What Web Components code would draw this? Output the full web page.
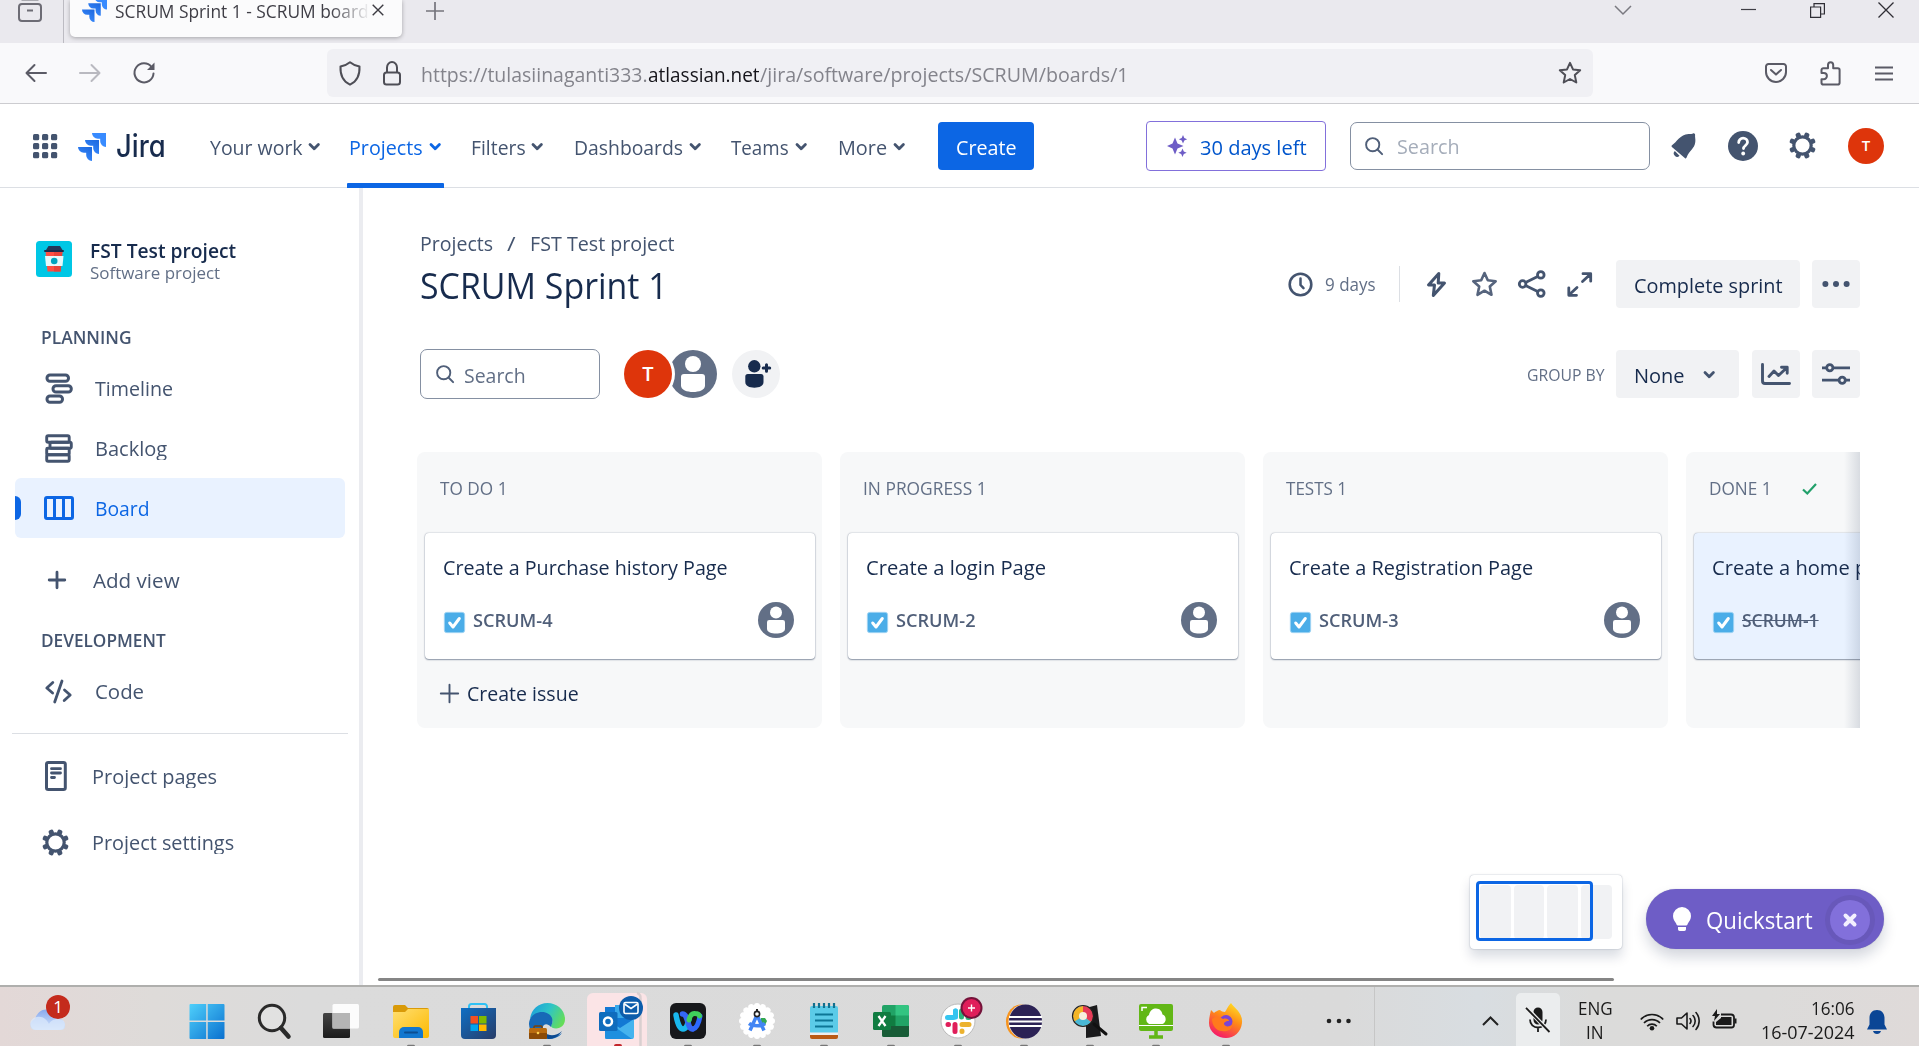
<!DOCTYPE html>
<html lang="en">
<head>
<meta charset="utf-8">
<title>SCRUM Sprint 1 - SCRUM board</title>
<style>
html,body{margin:0;padding:0}
body{width:1919px;height:1046px;overflow:hidden;background:#fff;font-family:"Open Sans","Noto Sans",sans-serif;font-size:20px;color:#44546f}
</style>
</head>
<body>
<desktop-screen></desktop-screen>
<script>
const G='#44546f';
const gear=`<circle cx="13.5" cy="13.5" r="8.7" fill="none" stroke="${G}" stroke-width="3.2"/><g fill="${G}">${[22.5,67.5,112.5,157.5,202.5,247.5,292.5,337.5].map(a=>`<rect x="11" y="0" width="5" height="5" rx="1.8" transform="rotate(${a} 13.5 13.5)"/>`).join('')}</g>`;
const chev=c=>`<path d="M2 2.5l4.2 4.3 4.2-4.3" fill="none" stroke="${c}" stroke-width="2.8" stroke-linecap="round" stroke-linejoin="round"/>`;
const jiraMark=`<defs><linearGradient id="a" x1="1" y1="0" x2=".4" y2="1"><stop offset=".1" stop-color="#1f6ae0"/><stop offset="1" stop-color="#388bff"/></linearGradient></defs><path fill="#388bff" d="M14 0h14v14a5.8 5.8 0 0 1-5.8-5.8V5.8h-2.4A5.8 5.8 0 0 1 14 0z"/><path fill="url(#a)" d="M7 7h14v14a5.8 5.8 0 0 1-5.8-5.8v-2.4h-2.4A5.8 5.8 0 0 1 7 7z"/><path fill="url(#a)" d="M0 14h14v14a5.8 5.8 0 0 1-5.8-5.8v-2.4H5.800A5.8 5.8 0 0 1 0 14z"/>`;
const run='<rect x="14" y="41.700" width="8" height="3" rx="1.5" fill="#777"/>';
const personShape='<circle cx="24" cy="24" r="24" fill="#626f86"/><circle cx="24" cy="14" r="8" fill="#fff"/><path d="M12 27a3 3 0 0 1 3-3h18a3 3 0 0 1 3 3v8.500C36 40 30 42 24 42s-12-2-12-6.500z" fill="#fff"/>';
const ICONS={
recent:[24,24,`<g fill="none" stroke="#6d6c75" stroke-width="2"><rect x="1" y="6" width="22" height="17" rx="3"/><path d="M3.500 1.500h17"/></g><path d="M9 12.500h6" stroke="#6d6c75" stroke-width="2"/>`],
jiraTab:[25,25,`<svg width="25" height="25" viewBox="0 0 28 28">${jiraMark}</svg>`],
jira:[28,28,jiraMark],
tabX:[12,12,`<path d="M.7.7l10.600 10.600M11.300.7L.7 11.300" stroke="#3c3b42" stroke-width="1.400"/>`],
tabPlus:[18,18,`<path d="M9 0v18M0 9h18" stroke="#75747c" stroke-width="1.700"/>`],
chevThin:[18,10,`<path d="M1 1l8 8 8-8" fill="none" stroke="#7a7980" stroke-width="1.500"/>`],
min:[15,14,`<path d="M0 6.500h15" stroke="#3f3e45" stroke-width="1.200"/>`],
restore:[15,15,`<path d="M.6 4h10v10.400H.6zM4 4V.6h10.400v10.400h-3.800" fill="none" stroke="#2f2e35" stroke-width="1.200"/>`],
winX:[16,16,`<path d="M.5.5l15 15M15.500.5l-15 15" stroke="#2f2e35" stroke-width="1.300"/>`],
back:[22,18,`<path d="M21 9H2M9.500 1L1.500 9l8 8" fill="none" stroke="#5b5b66" stroke-width="2" stroke-linecap="round" stroke-linejoin="round"/>`],
fwd:[22,18,`<path d="M1 9h19M12.500 1l8 8-8 8" fill="none" stroke="#b9b9c0" stroke-width="2" stroke-linecap="round" stroke-linejoin="round"/>`],
reload:[22,22,`<path d="M18.500 5A9.500 9.500 0 1 0 20.500 11.500" fill="none" stroke="#5b5b66" stroke-width="2" stroke-linecap="round"/><path d="M21.500.5v7.500h-7.500z" fill="#5b5b66"/>`],
shield:[22,25,`<path d="M11 1.200c2.600 2.200 6 3.600 9.500 4.200.4 8-1.500 14.600-9.500 18.300C3 20 1.100 13.400 1.500 5.400 5 4.800 8.400 3.400 11 1.200z" fill="none" stroke="#4e4e56" stroke-width="2" stroke-linejoin="round"/>`],
lock:[18,25,`<g fill="none" stroke="#4e4e56" stroke-width="2"><rect x="1" y="11.500" width="16" height="12" rx="2.500"/><path d="M4 11V6.500a5 5.500 0 0 1 10 0V11"/></g>`],
urlStar:[24,24,`<path d="M12 1.800l3 6.600 7.200.8-5.400 4.900 1.500 7.400L12 18l-6.300 3.500 1.500-7.400L1.800 9.200 9 8.400z" fill="none" stroke="#4e4e56" stroke-width="2" stroke-linejoin="round"/>`],
pocket:[22,20,`<g fill="none" stroke="#5b5b66" stroke-width="2" stroke-linecap="round" stroke-linejoin="round"><path d="M3.500 1h15A2.500 2.500 0 0 1 21 3.500V9a10 10 0 0 1-20 0V3.500A2.500 2.500 0 0 1 3.500 1z"/><path d="M6 7l5 4.600L16 7"/></g>`],
puzzle:[21,25,`<path d="M1.500 12V9a1.800 1.800 0 0 1 1.800-1.800H8V4a2.600 2.800 0 0 1 5.200 0v3.200h4.600A1.800 1.800 0 0 1 19.600 9v12.800a1.800 1.800 0 0 1-1.800 1.800H3.300a1.800 1.800 0 0 1-1.800-1.800v-3.600h2.300a3 3 0 0 0 0-6.200z" fill="none" stroke="#5b5b66" stroke-width="2" stroke-linejoin="round"/>`],
burger:[18,15,`<path d="M0 1.500h18M0 7.500h18M0 13.500h18" stroke="#5b5b66" stroke-width="1.800"/>`],
apps:[24,24,`<g fill="${G}">${[0,9,18].map(y=>[0,9,18].map(x=>`<rect x="${x}" y="${y}" width="6.200" height="6.200" rx="1.500"/>`).join('')).join('')}</g>`],
chev:[12.500,9,chev(G)],
chevBlue:[12.500,9,chev('#0c66e4')],
sparkle:[20,22,`<g fill="#6e5dc6"><path d="M8 2.500l2.500 6L16.500 11l-6 2.500-2.500 6-2.500-6L0 11l5.500-2.500z"/><path d="M16 0l1.300 2.900 2.900 1.300-2.900 1.300L16 8.400l-1.300-2.900-2.900-1.300 2.900-1.300z"/><path d="M15.500 13.500l1.300 2.900 2.900 1.300-2.900 1.300-1.300 2.900-1.300-2.900-2.900-1.300 2.900-1.300z"/></g>`],
search:[18,18,`<circle cx="7.700" cy="7.700" r="6.600" fill="none" stroke="#505f79" stroke-width="1.900"/><path d="M12.500 12.500l4.600 4.600" stroke="#505f79" stroke-width="2" stroke-linecap="round"/>`],
bell:[26,26,`<path d="M1 12.300C6 9 9 1.600 17.500 1.100c2.200-.1 3.500-.1 4.900-.9.900-.2 1.900.7 1.700 1.700-.3 2 .6 4 .2 7.200-.9 7.200-6 8-8.700 15.500a1.100 1.100 0 0 1-1.800.3L.9 13.900a1 1 0 0 1 .1-1.600z" fill="${G}"/><path d="M3.800 18l4.700 4.700a3.300 3.300 0 1 1-4.700-4.700z" fill="${G}"/>`],
help:[30,30,`<circle cx="15" cy="15" r="15" fill="${G}"/><path d="M10.700 11.600c0-2.700 1.900-4.400 4.400-4.400s4.400 1.700 4.400 4c0 3-4 3.500-4 6.300" fill="none" stroke="#fff" stroke-width="2.800" stroke-linecap="round"/><circle cx="15.200" cy="22.500" r="1.900" fill="#fff"/>`],
gear:[27,27,gear],
cup:[36,36,`<rect width="36" height="36" rx="3.500" fill="#00c7e5"/><path d="M9.500 10h17l-1.800 20.500H11.500z" fill="#ff4f43"/><path d="M18 10h8.500l-1.800 20.500H18z" fill="#e8433a"/><path d="M9 15h18.500l-1 10h-16.500z" fill="#e6f9fb"/><path d="M12.500 5h11.500l2.500 4H27.500v2H8.500V9h1.500z" fill="#253858"/><path d="M10 9h17.500v2h-19V9z" fill="#172b4d"/><circle cx="18.200" cy="20" r="3.300" fill="#00a3bf"/>`],
timeline:[28,31,`<g fill="none" stroke="${G}" stroke-width="3"><rect x="2" y="2" width="21.500" height="6.300" rx="3"/><rect x="8" y="12.800" width="18.300" height="6.300" rx="3"/><rect x="2" y="23" width="15.500" height="6.300" rx="3"/></g>`],
backlog:[28,29,`<g fill="none" stroke="${G}" stroke-width="2.900"><rect x="1.700" y="1.700" width="22.500" height="6.500" rx="1.500"/><rect x="5" y="8.200" width="21.300" height="6" rx="1.500"/><rect x="1.700" y="14.200" width="22.500" height="6.500" rx="1"/><rect x="1.700" y="20.700" width="22.500" height="6.500" rx="1.500"/></g>`],
board:[30,24,`<g fill="none" stroke="#0c66e4" stroke-width="3"><rect x="1.500" y="1.500" width="27" height="21" rx="1.500"/><path d="M10.500 1.500v21M19.500 1.500v21"/></g>`],
plus:[18,18,`<path d="M9 1.200v15.600M1.200 9h15.600" stroke="${G}" stroke-width="2.800" stroke-linecap="round"/>`],
plusThin:[19,19,`<path d="M9.500.8v17.400M.8 9.500h17.400" stroke="${G}" stroke-width="1.900" stroke-linecap="round"/>`],
code:[27,25,`<path d="M7.800 3.500L1.800 9l5.800 5M19.500 11l5.700 5-6 5.500M17 2L9.700 23" fill="none" stroke="${G}" stroke-width="2.800" stroke-linecap="round" stroke-linejoin="round"/>`],
page:[22,30,`<rect x="1.500" y="1.500" width="18.800" height="27" rx="1.800" fill="none" stroke="${G}" stroke-width="3"/><path d="M6.500 7.700h9M6.500 12h9M6.500 16.500h3" stroke="${G}" stroke-width="2.800" stroke-linecap="round"/>`],
clock:[25,25,`<circle cx="12.500" cy="12.500" r="10.800" fill="none" stroke="${G}" stroke-width="2.600"/><path d="M12.500 6.500v6.500l3 3.200" fill="none" stroke="${G}" stroke-width="2.500" stroke-linecap="round" stroke-linejoin="round"/>`],
bolt:[19,25,`<path d="M11.800 1.500L1.500 13h6l-1.200 10.500L17.500 11h-6.300z" fill="none" stroke="${G}" stroke-width="3" stroke-linejoin="round"/>`],
star:[27,27,`<path d="M13.500 2l3.300 7.300 7.900.9-5.900 5.300 1.700 8.300-7-4.100-7 4.100 1.700-8.300-5.900-5.300 7.900-.9z" fill="none" stroke="#56647d" stroke-width="2.600" stroke-linejoin="round"/>`],
share:[28,28,`<g fill="none" stroke="${G}" stroke-width="2.800"><circle cx="4.600" cy="14" r="3.300"/><circle cx="22.800" cy="4.900" r="3.300"/><circle cx="22.800" cy="23.100" r="3.300"/><path d="M7.500 12.400l12.200-6M7.500 15.600l12.200 6"/></g>`],
expand:[26,25,`<path d="M16 1.700h7.700v7.500M23 2.500l-7.500 7M9.500 23.300H1.800v-7.500M2.500 22.500l7.500-7" fill="none" stroke="${G}" stroke-width="2.800" stroke-linecap="round" stroke-linejoin="round"/>`],
dots:[28,8,`<g fill="${G}"><circle cx="3.400" cy="4" r="3"/><circle cx="14" cy="4" r="3"/><circle cx="24.600" cy="4" r="3"/></g>`],
chart:[30,22,`<g fill="none" stroke="${G}" stroke-width="2.900" stroke-linecap="round" stroke-linejoin="round"><path d="M1.500 1.500V18a2.500 2.500 0 0 0 2.500 2.500h24.500"/><path d="M8 13.500l5-5.500 4.500 4.500L26 4.500M20.500 4.200h5.700v6"/></g>`],
sliders:[28,22,`<g fill="none" stroke="${G}" stroke-width="2.800"><path d="M0 4.800h4.500M11 4.800h17M0 17.200h17M23.500 17.200H28"/><circle cx="7.800" cy="4.800" r="3.100"/><circle cx="20.200" cy="17.200" r="3.100"/></g>`],
person:[48,48,personShape],
person36:[36,36,`<svg width="36" height="36" viewBox="0 0 48 48">${personShape}</svg>`],
addPerson:[48,48,`<circle cx="24" cy="24" r="24" fill="#f1f2f4"/><g fill="#172b4d"><circle cx="22.300" cy="16.300" r="6.200"/><path d="M13.300 26.500a2.500 2.500 0 0 1 2.500-2.500h13.200a2.500 2.500 0 0 1 2.500 2.500V32c0 4-4 5.700-9.100 5.700S13.300 36 13.300 32z"/></g><path d="M34.500 14.800v6.500M31.200 18h6.500" stroke="#172b4d" stroke-width="3" stroke-linecap="round"/>`],
task:[21,21,`<rect x=".3" y=".3" width="20.400" height="20.400" rx="2.500" fill="#4bade8" stroke="#a9d8f4" stroke-width=".8"/><path d="M5.700 11l3.300 4L15.300 6.500" fill="none" stroke="#fff" stroke-width="3" stroke-linecap="round" stroke-linejoin="round"/>`],
done:[15,12,`<path d="M1 6.500l4.300 4L14 1" fill="none" stroke="#22a06b" stroke-width="2.200"/>`],
bulb:[18,24,`<path d="M9 0a9 9 0 0 1 9 9c0 3.500-1.800 5.200-3 7.200-.6 1-.5 2.300-1.800 2.300H4.800c-1.300 0-1.200-1.300-1.800-2.300C1.800 14.200 0 12.500 0 9a9 9 0 0 1 9-9zM5 20h8v2.300A1.700 1.700 0 0 1 11.300 24H6.700A1.700 1.700 0 0 1 5 22.300z" fill="#fff"/>`],
qx:[50,50,`<circle cx="25" cy="25" r="25" fill="#6858ba"/><circle cx="25" cy="25" r="20" fill="#8270db"/><path d="M20.500 20.500l9 9M29.500 20.500l-9 9" stroke="#f3f0ff" stroke-width="4" stroke-linecap="round"/>`],
/* taskbar */
weather:[42,43,`<defs><linearGradient id="c" x1="0" y1="0" x2="0" y2="1"><stop stop-color="#88a9ee"/><stop offset="1" stop-color="#d5e6fb"/></linearGradient></defs><path d="M6 27c-5 0-7-8 0-11 2-6 6-9.500 11-9.500 7 0 10 5 11 9 5 0 8 3 8 7S34 27 29 27z" fill="url(#c)"/><path d="M3 25c-3-4-2-10 5-11 6-1 10 3 12 7 2-4 8-7 15-3 2 4 1 9-6 9H8c-2 0-4-1-5-2z" fill="#dbe8fb" opacity=".75"/>`],
win:[36,43,`<defs><linearGradient id="w" x1="0" y1="0" x2="1" y2="1"><stop stop-color="#4fd0fb"/><stop offset="1" stop-color="#0a70cf"/></linearGradient></defs><path d="M1.500 1H17.200V17.500H.5V2a1 1 0 0 1 1-1zM18.700 1H34.500a1 1 0 0 1 1 1V17.500H18.700zM.5 19H17.200V36H1.500a1 1 0 0 1-1-1zM18.700 19h16.800v16a1 1 0 0 1-1 1H18.700z" fill="url(#w)"/>`],
tsearch:[36,43,`<circle cx="14" cy="15" r="12.700" fill="#e4e4e4" fill-opacity=".6" stroke="#2a2a2a" stroke-width="3"/><path d="M23 25l7.500 8.500" stroke="#2a2a2a" stroke-width="4.500" stroke-linecap="round"/>`],
taskview:[36,43,`<defs><linearGradient id="t" x1="0" y1="0" x2="0" y2="1"><stop stop-color="#444"/><stop offset="1" stop-color="#1c1c1c"/></linearGradient></defs><rect x="0" y="10" width="27" height="25" rx="1.500" fill="url(#t)"/><rect x="9.500" y="1" width="26.500" height="24.500" rx="1.500" fill="#fff" fill-opacity=".92"/><rect x="9.500" y="10" width="17.500" height="15.500" fill="#b5b5b5"/>`],
explorer:[36,43,`<defs><linearGradient id="e" x1="0" y1="0" x2="1" y2="1"><stop stop-color="#ffdf72"/><stop offset="1" stop-color="#fdb900"/></linearGradient></defs><path d="M0 4a2 2 0 0 1 2-2h10l3 3h19a2 2 0 0 1 2 2v4H0z" fill="#d99a08"/><path d="M0 9h12l3-3h21v27a2 2 0 0 1-2 2H2a2 2 0 0 1-2-2z" fill="url(#e)"/><path d="M6 35V29a5 5 0 0 1 5-5h14a5 5 0 0 1 5 5v6z" fill="#1277cf"/><path d="M12 29.500h12" stroke="#0b4e92" stroke-width="2" stroke-linecap="round"/>${run}`],
store:[36,43,`<defs><linearGradient id="s" x1="0" y1="0" x2="1" y2="1"><stop stop-color="#0f6fc4"/><stop offset="1" stop-color="#273c68"/></linearGradient></defs><path d="M9 8V3.500A2.500 2.500 0 0 1 11.500 1h13A2.500 2.500 0 0 1 27 3.500V8" fill="none" stroke="#2fc1f4" stroke-width="2"/><path d="M1 5h35v27a4 4 0 0 1-4 4H5a4 4 0 0 1-4-4z" fill="url(#s)"/><path d="M10.500 13H18v7.500h-7.500z" fill="#f25022"/><path d="M19 13h7.500v7.500H19z" fill="#7fba00"/><path d="M10.500 21.500H18V28h-7.500z" fill="#00a4ef"/><path d="M19 21.500h7.500V28H19z" fill="#ffb900"/>`],
edge:[36,43,`<defs><linearGradient id="e1" x1="0" y1=".2" x2="1" y2=".6"><stop stop-color="#1c9fdb"/><stop offset=".5" stop-color="#2ec4c6"/><stop offset="1" stop-color="#65dd58"/></linearGradient></defs><path d="M1 16C2 7 9 0 18.500 0 28 0 36 7 36 16c0 6-4 9.500-9 9.500-3 0-5-1-5-2.500s1.500-2 1.500-4.500c0-4-5-7-11-6C7 13.200 3 14 1 16z" fill="url(#e1)"/><path d="M0 21C0 14 6 9 13 9c6 0 10.500 4 10.500 9 0 3-1.500 4-1.500 6-5-6-11-1-7 5 4 5 11 6.500 18 1-3 4-8 6-14 6C8 36 0 29 0 21z" fill="#1769b7"/><path d="M16 30c4 3 11 3.500 17-2-3 5-8 8-14 8z" fill="#0c4a91"/><rect x="5" y="23" width="8" height="4" rx="1" fill="none" stroke="#7d4206" stroke-width="1.500"/><rect x="0" y="25" width="18" height="11" rx="1.500" fill="#b96b10"/><path d="M0 30h18v5a1 1 0 0 1-1 1H1a1 1 0 0 1-1-1z" fill="#8c4b07"/><circle cx="9" cy="30" r="1.300" fill="#ffd250"/>${run}`],
outlook:[60,55,`<path d="M0 8a6 6 0 0 1 6-6h48a6 6 0 0 1 6 6v52H0z" fill="#fbe4e6"/><path d="M50 2c4 1 3.500 4 3.500 8v46" fill="none" stroke="#d9cfd0" stroke-width="2.500"/><path d="M18 16h28v30a2 2 0 0 1-2 2H20a2 2 0 0 1-2-2z" fill="#1279d4"/><path d="M28 14h18v13H28z" fill="#39a9ea"/><path d="M18 28l15 9 14-9v18a2 2 0 0 1-2 2H20a2 2 0 0 1-2-2z" fill="#45b3ee"/><path d="M18 29v17a2 2 0 0 0 2 2h25z" fill="#1e8fdf"/><rect x="12" y="21" width="18.500" height="19" rx="1.500" fill="#0f6cbd"/><circle cx="21" cy="30.500" r="4" fill="none" stroke="#fff" stroke-width="2.500"/><circle cx="44" cy="17" r="12" fill="#0d5cab"/><g fill="none" stroke="#fff" stroke-width="1.600"><rect x="37" y="11.500" width="14" height="11" rx="1.500"/><path d="M37.500 13l6.500 4.500 6.500-4.500"/></g><rect x="27" y="53" width="8" height="4" rx="2" fill="#c3262c"/>`],
webex:[36,43,`<rect width="36" height="36" rx="6" fill="#17181b"/><path d="M23 26c4-1 6-7 7-13" fill="none" stroke="#2c69ff" stroke-width="5" stroke-linecap="round"/><path d="M6 12c1.500 9 4 14 7 14 4 0 5-6 6-10" fill="none" stroke="#19b8ee" stroke-width="5.500" stroke-linecap="round"/><path d="M12.500 11c6 0 4.500 15 10 15" fill="none" stroke="#3467f5" stroke-width="5.500" stroke-linecap="round"/><path d="M19 17c1-4 3-7 6-6.500 2 0 4 1 4.500 2.500" stroke="#3fcf5b" stroke-width="5" stroke-linecap="round" fill="none"/>${run}`],
studio:[36,43,`<g fill="#fff"><circle cx="18" cy="18" r="16"/>${[...Array(16)].map((_,i)=>`<circle cx="18" cy="3" r="3" transform="rotate(${i*22.5} 18 18)"/>`).join('')}</g><path d="M22 15h4l2 3-2 4h-4z" fill="#35a853"/><path d="M18 12L11 27.500M18 12l7 15.500M10 20.500c4 3 12 3 16 0" fill="none" stroke="#4285f4" stroke-width="3.500"/><circle cx="18" cy="11" r="2.600" fill="#fff" stroke="#222" stroke-width="1.600"/><path d="M18 6v3" stroke="#222" stroke-width="2"/>${run}`],
notepad:[36,43,`<path d="M4 31h28v3a2 2 0 0 1-2 2H6a2 2 0 0 1-2-2z" fill="#b95a14"/><rect x="4" y="3" width="28" height="28" rx="2" fill="#5bcbe8"/><rect x="4" y="29.500" width="28" height="2.500" fill="#eee"/><path d="M8 0v5M13 0v5M18 0v5M23 0v5M28 0v5" stroke="#12708f" stroke-width="2.200"/><path d="M9 11.500h18M9 17.500h18M9 23.500h18" stroke="#0d7696" stroke-width="2.200"/>${run}`],
excel:[36,43,`<rect x="9" y="2" width="27" height="32" rx="2" fill="#21a366"/><path d="M22.500 2H34a2 2 0 0 1 2 2v8.500H22.500z" fill="#33c481"/><path d="M9 12.500h13.500V23H9z" fill="#107c41"/><path d="M9 23h27v9a2 2 0 0 1-2 2H11a2 2 0 0 1-2-2z" fill="#185c37"/><rect x="0" y="9" width="18" height="18" rx="1.500" fill="#107c41"/><path d="M5.500 13l7 10M12.500 13l-7 10" stroke="#fff" stroke-width="2.300"/>${run}`],
slack:[44,43,`<circle cx="18" cy="18" r="17" fill="#fff" stroke="#bbb" stroke-width="1"/><g stroke-width="5" stroke-linecap="round"><path d="M7.500 14.500h6M15.500 8v1" stroke="#36c5f0"/><path d="M15.500 8v6" stroke="#36c5f0"/><path d="M21.500 8v6M28 14.500h1" stroke="#2eb67d"/><path d="M22 21.500h7M22 28v.5" stroke="#ecb22e"/><path d="M15 21.500v7M8 21.500h.5" stroke="#e01e5a"/></g><circle cx="31.500" cy="5" r="11" fill="#74133a"/><circle cx="31.500" cy="5" r="9" fill="#e01e5a"/><path d="M31.500 1.500v7M28 5h7" stroke="#fff" stroke-width="1.400"/>${run}`],
eclipse:[36,43,`<ellipse cx="15" cy="18.500" rx="15" ry="17" fill="#f7941e"/><ellipse cx="18" cy="18.500" rx="15.500" ry="17" fill="#e3e0e8"/><ellipse cx="19.500" cy="18.500" rx="16.500" ry="17" fill="#2c2255"/><path d="M3 14h33M3 18.500h33M3 23h33" stroke="#fff" stroke-width="1.800"/>${run}`],
picker:[40,43,`<path d="M14 5l11-3 4 31-15 2z" fill="#1a1a1c"/><path d="M22 21l12 10" stroke="#111" stroke-width="3" stroke-linecap="round"/><circle cx="11" cy="13" r="10" fill="#f4b526"/><path d="M11 3a10 10 0 0 1 8 16L11 13z" fill="#e53b58"/><path d="M19 19a10 10 0 0 1-16.500-.5L11 13z" fill="#49b8d6"/><circle cx="11" cy="13" r="4" fill="#f7f0dc"/><circle cx="11" cy="13" r="10.500" fill="none" stroke="#222" stroke-width="1.200"/>${run}`],
cloudpc:[36,43,`<rect x="1" y="1" width="34" height="27" rx="2" fill="#62b716"/><path d="M4 8V4.500h5" stroke="#fff" stroke-width="1.500" fill="none"/><path d="M11 21a5 5 0 0 1 0-9c1-5 4-6.500 7-6.500 4 0 6 3 6.500 6 4 1 4.500 8 0 9.500z" fill="#fff"/><path d="M1 22.500h34" stroke="#fff" stroke-width="1.200"/><path d="M18 28v6M11 34h14" stroke="#62b716" stroke-width="3.500"/>${run}`],
firefox:[36,43,`<defs><linearGradient id="f" x1=".8" y1="0" x2=".3" y2="1"><stop stop-color="#ffe226"/><stop offset=".45" stop-color="#ff8a16"/><stop offset="1" stop-color="#f5156c"/></linearGradient></defs><path d="M3 7c1 1 2 2 3 3 1-1 4-3 6-3 1 1 3 2 5 2 2-3 3-6 6-9 2 4 12 9 11 20-1 9-8 15-16 15S1 29 1 20c0-5 1-9 2-13z" fill="url(#f)"/><circle cx="18" cy="18.500" r="6.500" fill="#7a45d6"/><path d="M4 16c4-3 8-2 11 0 3-1 6 0 6 2-4 0-5 2-5 3 1 3 5 3 8 1 0 5-5 7-10 6C8 28 4 22 4 16z" fill="#ff7a1c"/>${run}`],
tdots:[26,8,`<g fill="#222"><circle cx="3" cy="4" r="2.300"/><circle cx="13" cy="4" r="2.300"/><circle cx="22.500" cy="4" r="2.300"/></g>`],
up:[17,10,`<path d="M1 9l7.500-7.500L16 9" fill="none" stroke="#222" stroke-width="2"/>`],
mic:[26,26,`<path d="M8.500 5a4.500 4.500 0 0 1 9 0v8a4.500 4.500 0 0 1-9 0z" fill="#1a1a1a"/><path d="M5 12.500c0 5 3.500 8 8 8s8-3 8-8M13 20.500V25" fill="none" stroke="#1a1a1a" stroke-width="1.800"/><path d="M1.500.8L24.500 25" stroke="#eee" stroke-width="4"/><path d="M1 .8L24.500 25" stroke="#1a1a1a" stroke-width="1.800"/>`],
wifi:[24,19,`<g fill="none" stroke="#1a1a1a" stroke-width="1.700"><path d="M.8 7.500a15 15 0 0 1 22.400 0M4 11a11 11 0 0 1 16 0M7.200 14.200a6.500 6.500 0 0 1 9.600 0"/></g><circle cx="12" cy="16.300" r="2.300" fill="#1a1a1a"/>`],
vol:[25,20,`<g fill="none" stroke="#1a1a1a" stroke-width="1.600" stroke-linejoin="round"><path d="M1 7h4.500L11 2v16l-5.500-5H1z"/><path d="M14 7.500a4 4 0 0 1 0 5M17 4.500a8 8 0 0 1 0 11M20 1.500a13 13 0 0 1 0 17" stroke-linecap="round"/></g>`],
batt:[25,20,`<path d="M9 3.500h10a3 3 0 0 1 3 3v7.500a2.500 2.500 0 0 1-2.500 2.500h-15A3 3 0 0 1 1.500 14v-3.500" fill="none" stroke="#1a1a1a" stroke-width="1.800"/><path d="M9 6h10.500v8H4v-3L9 7z" fill="#1a1a1a"/><path d="M22.500 7.500h2v5h-2z" fill="#1a1a1a"/><path d="M5-2L0 5h3L2 10l6-7H5z" fill="#1a1a1a"/>`],
notif:[20,24,`<path d="M10 0c4.700 0 7.500 3.500 7.500 8v6.500L20 19.500H0l2.500-5V8C2.500 3.500 5.300 0 10 0zM6 21h8c-.5 2-2 3-4 3s-3.500-1-4-3z" fill="#0a4595"/>`]
};
const define=(name,css,html,after)=>customElements.define(name,class extends HTMLElement{
  connectedCallback(){
    if(this.shadowRoot)return;
    this.attachShadow({mode:'open'}).innerHTML=`<style>:host{box-sizing:border-box;flex:none}*{box-sizing:border-box}${css}</style>`+(typeof html==='function'?html(this):html);
    if(after)after(this);
  }
});
const T=(w,t,s='')=>`<fit-text w="${w}" style="${s}">${t}</fit-text>`;
const I=(n,s='')=>`<ui-icon name="${n}" style="${s}"></ui-icon>`;
const ml=n=>`margin-left:${n}px;`;

define('ui-icon',':host{display:block;line-height:0}svg{display:block;overflow:visible}',e=>{
  const[w,h,b]=ICONS[e.getAttribute('name')];
  return `<svg width="${w}" height="${h}" viewBox="0 0 ${w} ${h}">${b}</svg>`;});

define('tab-strip',`:host{display:flex;height:43px;background:#eae9ee;align-items:flex-start}
.sep{width:1px;height:43px;background:#bcbbc2;margin-left:21px}
.tab{display:flex;align-items:flex-start;width:332px;height:37px;margin-left:6px;background:#fbfbfc;border-radius:0 0 5px 5px;box-shadow:0 1px 4px rgba(0,0,0,.3);font-size:18px;color:#3f3e46}
.fade{width:254px;overflow:hidden;margin-left:8px;-webkit-mask:linear-gradient(90deg,#000 215px,transparent 256px)}`,
`${I('recent','margin-left:18px;margin-top:-2px')}<div class="sep"></div>
<div class="tab">${I('jiraTab','margin-left:12px;margin-top:-3px')}<div class="fade">${T(253,'SCRUM Sprint 1 - SCRUM board','line-height:22px')}</div>${I('tabX','margin-left:3px;margin-top:4px')}</div>
${I('tabPlus','margin-left:24px;margin-top:2px')}
${I('chevThin','margin-left:1170px;margin-top:5px')}${I('min','margin-left:109px;margin-top:3px')}${I('restore','margin-left:54px;margin-top:3px')}${I('winX','margin-left:53px;margin-top:2px')}`);

define('address-bar',`:host{display:flex;height:61px;background:#f9f9fb;border-bottom:1px solid #ccccd0;align-items:center;padding-left:25px}
.url{display:flex;align-items:center;width:1266px;height:48px;margin-left:172px;background:#f0f0f4;border-radius:6px;color:#83838b}
.d{color:#15141a}.s{flex:1}`,
`${I('back')}${I('fwd',ml(32))}${I('reload',ml(32))}
<div class="url">${I('shield',ml(12))}${I('lock',ml(22))}${T(226,'https://tulasiinaganti333.',ml(20)+'margin-top:2px')}<span class="d">${T(111,'atlassian.net',ml(1)+'margin-top:2px')}</span>${T(368,'/jira/software/projects/SCRUM/boards/1',ml(1)+'margin-top:2px')}<span class="s"></span>${I('urlStar','margin-right:11px')}</div>
${I('pocket',ml(172))}${I('puzzle',ml(33))}${I('burger',ml(34))}`);

define('nav-item',`:host{display:flex;align-items:center;height:83px;gap:6px;position:relative;padding-top:2px}
fit-text{margin-top:2px}
:host([active]){color:#0c66e4}
:host([active])::after{content:"";position:absolute;left:-3px;right:-3px;bottom:-1px;height:5px;background:#0c66e4;border-radius:1px 1px 0 0}`,
e=>`${T(e.getAttribute('w'),e.textContent)}${I(e.hasAttribute('active')?'chevBlue':'chev')}`);

define('user-badge',`:host{display:grid;place-items:center;border-radius:50%;background:#de350b;color:#fff;width:48px;height:48px;font-size:20px;font-weight:600;line-height:1}`,`<slot></slot>`);

define('jira-header',`:host{display:flex;align-items:center;height:84px;border-bottom:1px solid #dcdfe4;padding-left:33px}
.logo{font-family:Inter,sans-serif;font-feature-settings:"cv11";font-weight:500;font-size:31px;color:#172b4d;line-height:40px}
.create{display:flex;align-items:center;width:96px;height:48px;background:#0c66e4;color:#fff;border-radius:4px;padding:3px 0 0 18px;margin-left:33px}
.trial{display:flex;align-items:center;width:180px;height:50px;border:1px solid #8270db;border-radius:4px;color:#0055cc;margin-left:112px;padding-left:20px}
.find{display:flex;align-items:center;width:300px;height:48px;border:1px solid #8590a2;border-radius:7px;color:#a5adba;margin-left:24px;padding-left:14px}
user-badge{width:36px;height:36px;font-size:15px;margin-left:32px}`,
`${I('apps')}${I('jira',ml(21)+'margin-top:2px')}<span class="logo">${T(49,'Jira',ml(10))}</span>
<nav-item w="92" style="${ml(45)}">Your work</nav-item><nav-item w="73" active style="${ml(29)}">Projects</nav-item><nav-item w="54" style="${ml(30)}">Filters</nav-item><nav-item w="108.500" style="${ml(31)}">Dashboards</nav-item><nav-item w="57" style="${ml(30)}">Teams</nav-item><nav-item w="48.500" style="${ml(31)}">More</nav-item>
<div class="create">${T(60,'Create')}</div>
<div class="trial">${I('sparkle')}${T(106,'30 days left',ml(13)+'margin-top:3px')}</div>
<div class="find">${I('search')}${T(62,'Search',ml(14)+'margin-top:1px')}</div>
${I('bell',ml(21))}${I('help',ml(31))}${I('gear',ml(31))}<user-badge>T</user-badge>`);

define('side-item',`:host{display:flex;align-items:center;height:60px;width:330px;margin-left:15px;border-radius:6px;position:relative}
:host([active]){background:#e9f2ff;color:#0c66e4}
:host([active])::before{content:"";position:absolute;left:0;top:18px;width:6px;height:24px;background:#0c66e4;border-radius:0 6px 6px 0}
.i{width:var(--tx,80px);padding-left:var(--ix,30px)}
.t{height:26px;line-height:26px;margin-top:1px}
:host([clip]) .t{height:24px;overflow:hidden;margin-top:-1px}`,
e=>`<div class="i">${I(e.getAttribute('icon'))}</div><div class="t">${T(e.getAttribute('w'),e.textContent)}</div>`);

define('side-heading',`:host{display:block;margin-left:41px;height:24px;line-height:24px;font-size:17.500px;font-weight:600}`,e=>T(e.getAttribute('w'),e.textContent));

define('project-sidebar',`:host{display:flex;flex-direction:column;width:363px;border-right:4px solid #ebecf0;padding-top:51px}
.proj{display:flex;height:44px;margin-left:36px;align-items:center}
.proj div{display:flex;flex-direction:column;margin-left:18.500px}
.n{color:#172b4d;font-weight:600;line-height:23px}.k{font-size:17px;color:#626f86;line-height:21px}
hr{width:336px;height:1px;border:0;background:#dcdfe4;margin:12px 0 0 12px;flex:none}`,
`<div class="proj">${I('cup','margin-top:-4px')}<div><span class="n">${T(145.5,'FST Test project')}</span><span class="k">${T(129.5,'Software project')}</span></div></div>
<side-heading w="90" style="margin-top:42px">PLANNING</side-heading>
<side-item icon="timeline" w="77.500" style="margin-top:9px">Timeline</side-item>
<side-item icon="backlog" w="71.500" clip>Backlog</side-item>
<side-item icon="board" w="54" active style="--ix:29px">Board</side-item>
<side-item icon="plus" w="86" style="--ix:33px;--tx:78px;margin-top:12px">Add view</side-item>
<side-heading w="124" style="margin-top:18px">DEVELOPMENT</side-heading>
<side-item icon="code" w="48.500" style="margin-top:9px">Code</side-item>
<hr>
<side-item icon="page" w="124.500" clip style="--tx:77px;margin-top:12px">Project pages</side-item>
<side-item icon="gear" w="141.500" clip style="--ix:27px;--tx:77px;margin-top:6px">Project settings</side-item>`);

define('soft-button',`:host{display:flex;align-items:center;justify-content:center;width:48px;height:48px;background:#f1f2f4;border-radius:4px;color:#172b4d}`,`<slot></slot>`);

define('issue-card',`:host{display:block;width:390px;height:126px;margin-left:8px;background:#fff;border-radius:4px;box-shadow:0 1px 1.500px rgba(9,30,66,.4),0 0 1.500px rgba(9,30,66,.4);color:#172b4d}
:host([done]){background:#e9f2ff}
.t{display:flex;align-items:center;height:69px;padding-left:18px}
.b{display:flex;align-items:center;height:36px;padding:0 21px 0 19px}
.k{font-size:17.500px;font-weight:600;color:#505f79;margin-left:8px}
.s{flex:1}`,
e=>`<div class="t">${T(e.getAttribute('w'),e.textContent)}</div><div class="b">${I('task','margin-top:4px')}<span class="k">${T(e.hasAttribute('done')?76:79,e.getAttribute('key'),e.hasAttribute('done')?'text-decoration:line-through':'')}</span><span class="s"></span>${I('person36')}</div>`);

define('board-column',`:host{display:block;width:405px;height:276px;background:#f7f8f9;border-radius:8px}
.h{display:flex;align-items:center;height:73px;padding-left:23px;margin-bottom:8px;font-size:17.500px;color:#626f86}
.h fit-text{margin-top:-2px}`,
e=>`<div class="h">${T(e.getAttribute('w'),e.getAttribute('title-text'))}<slot name="mark"></slot></div><slot></slot>`);

define('board-minimap',`:host{position:absolute;left:1470px;top:875px;width:152px;height:74px;background:#fff;border-radius:4px;box-shadow:0 8px 12px rgba(9,30,66,.15),0 0 1.500px rgba(9,30,66,.4);display:flex;gap:3px;padding:10px 0 0 10px}
i{width:30.700px;height:54px;background:#f1f2f4;border-radius:4px}
b{position:absolute;left:6px;top:6px;width:117px;height:60px;border:3px solid #0c66e4;border-radius:4px}`,`<i></i><i></i><i></i><i></i><b></b>`);

define('quick-start',`:host{position:absolute;left:1646px;top:889px;width:238px;height:60px;background:#6e5dc6;border-radius:30px;box-shadow:0 8px 14px rgba(9,30,66,.18),0 0 1px rgba(9,30,66,.3);display:flex;align-items:center;padding-left:27px;color:#fff;font-size:24px}`,
`${I('bulb')}${T(106,'Quickstart',ml(15)+'margin-top:1px')}${I('qx',ml(13)+'margin-top:2px')}`);

define('sprint-board',`:host{display:flex;flex-direction:column;width:1556px;padding:40px 0 0 54px}
.r{display:flex;align-items:center}
.crumbs{height:30px;margin-bottom:2px;padding-left:3.500px}
.head{height:48px;width:1443px;padding-left:3.500px}
h1{margin:0;font-size:36px;font-weight:400;color:#172b4d;line-height:44px;padding-top:4px}
.s{flex:1}
.tools{height:50px;width:1443px;margin-top:41px;padding-left:3px}
.find{display:flex;align-items:center;width:180px;height:50px;border:1px solid #8590a2;border-radius:7px;color:#626f86;padding-left:15px}
.days{font-size:17.500px;color:#626f86}
.v{width:1px;height:36px;background:#dcdfe4;margin:0 27px 0 24px}
.board{display:flex;gap:18px;width:1443px;height:276px;margin-top:53px;overflow:hidden;position:relative}
.board::after{content:"";position:absolute;right:0;top:0;bottom:0;width:16px;background:linear-gradient(90deg,rgba(9,30,66,0),rgba(9,30,66,.13))}
.add{display:flex;align-items:center;margin:14px 0 0 23px;height:40px;color:#172b4d}
user-badge{position:relative;z-index:1;box-shadow:0 0 0 3px #fff}
.bar{width:1236px;height:3px;border-radius:2px;background:#858585;margin:250px 0 0 -39px}`,
`<div class="r crumbs">${T(72.5,'Projects')}${T(8,'/',ml(14))}${T(144,'FST Test project',ml(15))}</div>
<div class="r head"><h1>${T(247,'SCRUM Sprint 1')}</h1><span class="s"></span>
${I('clock')}<span class="days">${T(50,'9 days',ml(12))}</span><span class="v"></span>${I('bolt')}${I('star',ml(25))}${I('share',ml(20))}${I('expand',ml(21))}
<soft-button style="width:184px;margin-left:23px">${T(148,'Complete sprint','margin-top:2px')}</soft-button><soft-button style="margin-left:12px">${I('dots')}</soft-button></div>
<div class="r tools"><div class="find">${I('search')}${T(61,'Search',ml(10)+'margin-top:2px')}</div>
<user-badge style="margin-left:24px">T</user-badge>${I('person','margin-left:-3px')}${I('addPerson',ml(15))}<span class="s"></span>
<span style="font-size:16.500px;color:#626f86">${T(77,'GROUP BY',ml(1)+'margin-top:1px')}</span>
<soft-button style="width:123px;margin-left:12px">${T(50,'None','margin-top:2px;margin-left:-5px')}${I('chev',ml(19))}</soft-button><soft-button style="margin-left:13px">${I('chart')}</soft-button><soft-button style="margin-left:12px">${I('sliders')}</soft-button></div>
<div class="board">
<board-column title-text="TO DO 1" w="67"><issue-card key="SCRUM-4" w="284">Create a Purchase history Page</issue-card><div class="add">${I('plusThin')}${T(111,'Create issue',ml(8)+'margin-top:1px')}</div></board-column>
<board-column title-text="IN PROGRESS 1" w="123"><issue-card key="SCRUM-2" w="179.500">Create a login Page</issue-card></board-column>
<board-column title-text="TESTS 1" w="60.500"><issue-card key="SCRUM-3" w="243.500">Create a Registration Page</issue-card></board-column>
<board-column title-text="DONE 1" w="62"><ui-icon slot="mark" name="done" style="margin-left:31px"></ui-icon><issue-card done key="SCRUM-1" w="188">Create a home page</issue-card></board-column>
</div><div class="bar"></div>`);

define('task-bar',`:host{display:flex;align-items:flex-end;height:61px;border-top:2px solid #afafad;background:linear-gradient(90deg,#e3d8d7 0,#dedbd9 8%,#dbdbdb 16%,#dadada 70%,#d8dde1 77%,#dbdbda 83%,#dcdbda 92%,#dfdad9 100%);color:#1a1a1a;font-size:17.500px;overflow:hidden}
.badge{width:24px;height:24px;border-radius:50%;background:#c42b1c;color:#fff;font-size:17px;line-height:24px;text-align:center;margin:0 5px 27px -25px;position:relative}
.v{width:1px;height:59px;background:#c6c6c6;margin-left:22px}
.c{display:flex;align-items:center;height:59px}
.mic{width:44px;height:53px;background:#ebedee;border-radius:5px 5px 0 0;display:grid;place-items:center;margin-left:17px}
.two{display:flex;flex-direction:column;height:59px;justify-content:center;line-height:23.500px;padding-top:8px}`,
`${I('weather',ml(29))}<div class="badge">1</div>
${I('win',ml(114))}${I('tsearch',ml(33))}${I('taskview',ml(28.5))}${I('explorer',ml(34))}${I('store',ml(31.5))}${I('edge',ml(32.5))}${I('outlook',ml(22))}${I('webex',ml(23))}${I('studio',ml(33))}${I('notepad',ml(31.5))}${I('excel',ml(30.5))}${I('slack',ml(31.5))}${I('eclipse',ml(21.5))}${I('picker',ml(30))}${I('cloudpc',ml(26))}${I('firefox',ml(34))}
<div class="c" style="${ml(82)}padding-top:9px">${I('tdots')}</div><div class="v"></div>
<div class="c" style="${ml(107.5)}padding-top:9px">${I('up')}</div><div class="mic">${I('mic')}</div>
<div class="two" style="${ml(18)}align-items:center">${T(34,'ENG')}${T(17,'IN')}</div>
<div class="c" style="${ml(28)}padding-top:9px">${I('wifi')}${I('vol',ml(12))}${I('batt',ml(11))}</div>
<div class="two" style="${ml(24)}align-items:flex-end">${T(43,'16:06')}${T(93,'16-07-2024')}</div>
<div class="c" style="${ml(13)}padding-top:10px">${I('notif')}</div>`);

define('desktop-screen',`:host{display:flex;flex-direction:column;width:1919px;height:1046px;overflow:hidden;position:relative}
.m{display:flex;height:797px;overflow:hidden;flex:none}`,
`<tab-strip></tab-strip><address-bar></address-bar><jira-header></jira-header><div class="m"><project-sidebar></project-sidebar><sprint-board></sprint-board></div><task-bar></task-bar><board-minimap></board-minimap><quick-start></quick-start>`);

/* Condenses or widens its slotted line of text so that it fills the width in "w". */
define('fit-text',':host{display:block;white-space:nowrap}span{display:inline-block;margin-left:-.3px;transform-origin:0 50%;text-decoration:inherit}','<span><slot></slot></span>',e=>{
  const s=e.shadowRoot.querySelector('span'),w=+e.getAttribute('w');
  const n=s.getBoundingClientRect().width;
  e.style.width=w+'px';
  if(n)s.style.transform=`scaleX(${(w+.6)/n})`;
});
</script>
</body>
</html>
